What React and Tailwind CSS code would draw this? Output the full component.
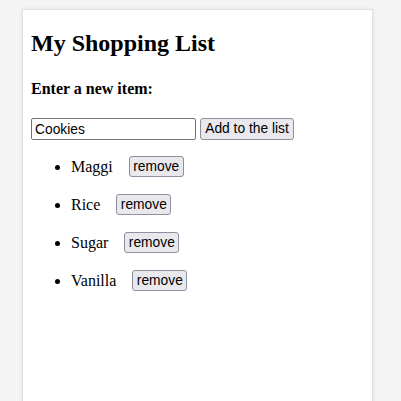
export default function App() {
  const items = ["Maggi", "Rice", "Sugar", "Vanilla"];

  return (
    <div className="min-h-screen bg-[#f4f4f4] pl-[22px] pt-[9px] font-['Liberation_Serif',serif] text-black">
      <div className="w-[351px] min-h-[400px] bg-white border border-[#e0e0e0] shadow-[0_0_4px_rgba(0,0,0,0.08)] pl-[8px]">
        <h2 className="mt-[19px] text-[24px] leading-[28px] font-bold">My Shopping List</h2>
        <h4 className="mt-[22px] text-[16px] leading-[20px] font-bold">Enter a new item:</h4>

        <div className="mt-[19px] flex items-center gap-[4px] font-['Liberation_Sans',Arial,sans-serif] text-[13.8px]">
          <input
            type="text"
            defaultValue="Cookies"
            className="w-[165px] h-[22px] border border-[#767676] rounded-[2px] px-[3px] outline-none"
          />
          <button className="h-[22px] w-[94px] whitespace-nowrap bg-[#e9e9ed] border border-[#8f8f9d] rounded-[3px] px-0">
            Add to the list
          </button>
        </div>

        <ul className="mt-[16px] list-disc pl-[40px] text-[16px]">
          {items.map((item) => (
            <li key={item} className="h-[21px] leading-[21px] mb-[17px]">
              {item}
              <button className="ml-[16px] align-top w-[55px] h-[21px] bg-[#e9e9ed] border border-[#8f8f9d] rounded-[3px] font-['Liberation_Sans',Arial,sans-serif] text-[13.8px] leading-[19px]">
                remove
              </button>
            </li>
          ))}
        </ul>
      </div>
    </div>
  );
}
